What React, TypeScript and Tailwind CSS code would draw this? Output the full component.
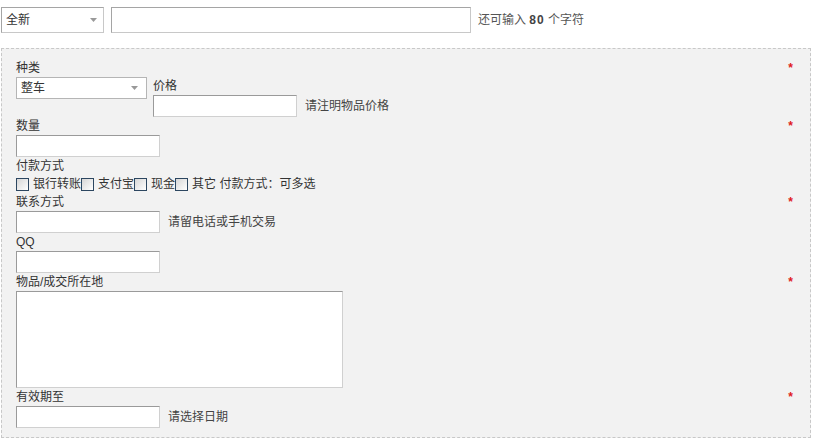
import React from "react";

function Arrow() {
  return (
    <svg width="7" height="4" viewBox="0 0 7 4" className="block">
      <path d="M0 0h7L3.5 4z" fill="#999" />
    </svg>
  );
}

function Field({ w = "w-[144px]" }: { w?: string }) {
  return (
    <input
      type="text"
      className={`block h-[22px] ${w} border border-[#9a9a9a] border-b-[#d0d0d0] border-r-[#d0d0d0] bg-white outline-none`}
    />
  );
}

function Check() {
  return (
    <span className="inline-block h-[13px] w-[13px] border border-[#2c4660] bg-gradient-to-br from-[#d6d6d6] to-white" />
  );
}

function Label({ text, required }: { text: string; required?: boolean }) {
  return (
    <div className="flex justify-between h-[18px]">
      <span>{text}</span>
      {required && <span className="font-bold text-[#e0191b]">*</span>}
    </div>
  );
}

export default function App() {
  return (
    <div className="min-h-screen bg-white pl-[1px] pt-[7px] text-[12px] leading-[18px] text-[#333] font-['Liberation_Sans','Noto_Sans_CJK_SC',sans-serif]">

      <div className="flex items-center">

        <div className="flex h-[26px] w-[103px] items-center justify-between border border-[#a5a5a5] border-b-[#c8c8c8] border-r-[#c8c8c8] bg-white pl-[4px] pr-[6px]">
          <span>全新</span>
          <Arrow />
        </div>

        <input
          type="text"
          className="ml-[7px] block h-[26px] w-[360px] border border-[#a5a5a5] border-b-[#c8c8c8] border-r-[#c8c8c8] bg-white outline-none"
        />

        <span className="ml-[7px] text-[#555]">
          还可输入 <b className="font-bold tracking-[1px] text-[#444]">80</b> 个字符
        </span>

      </div>

      <div className="mt-[15px] w-[810px] border border-dashed border-[#c8c8c8] bg-[#f2f2f2] pl-[14px] pr-[17px] pt-[10px] pb-[9px]">

        <Label text="种类" required />

        <div className="flex">

          <div className="flex h-[22px] w-[131px] items-center justify-between border border-[#b5b5b5] bg-white pl-[4px] pr-[8px]">
            <span>整车</span>
            <Arrow />
          </div>

          <div className="ml-[6px]">
            <div className="h-[18px]">价格</div>
            <div className="flex items-center">
              <Field />
              <span className="ml-[8px] text-[#444]">请注明物品价格</span>
            </div>
          </div>

        </div>

        <Label text="数量" required />
        <Field />

        <Label text="付款方式" />
        <div className="flex h-[18px] items-center">
          <Check />
          <span className="ml-[4px]">银行转账</span>
          <Check />
          <span className="ml-[4px]">支付宝</span>
          <Check />
          <span className="ml-[4px]">现金</span>
          <Check />
          <span className="ml-[4px]">其它 付款方式：可多选</span>
        </div>

        <Label text="联系方式" required />
        <div className="flex items-center">
          <Field />
          <span className="ml-[8px] text-[#444]">请留电话或手机交易</span>
        </div>

        <Label text="QQ" />
        <Field />

        <Label text="物品/成交所在地" required />
        <textarea className="block h-[97px] w-[327px] resize-none border border-[#9a9a9a] border-b-[#d0d0d0] border-r-[#d0d0d0] bg-white outline-none" />

        <Label text="有效期至" required />
        <div className="flex items-center">
          <Field />
          <span className="ml-[8px] text-[#444]">请选择日期</span>
        </div>

      </div>

    </div>
  );
}
